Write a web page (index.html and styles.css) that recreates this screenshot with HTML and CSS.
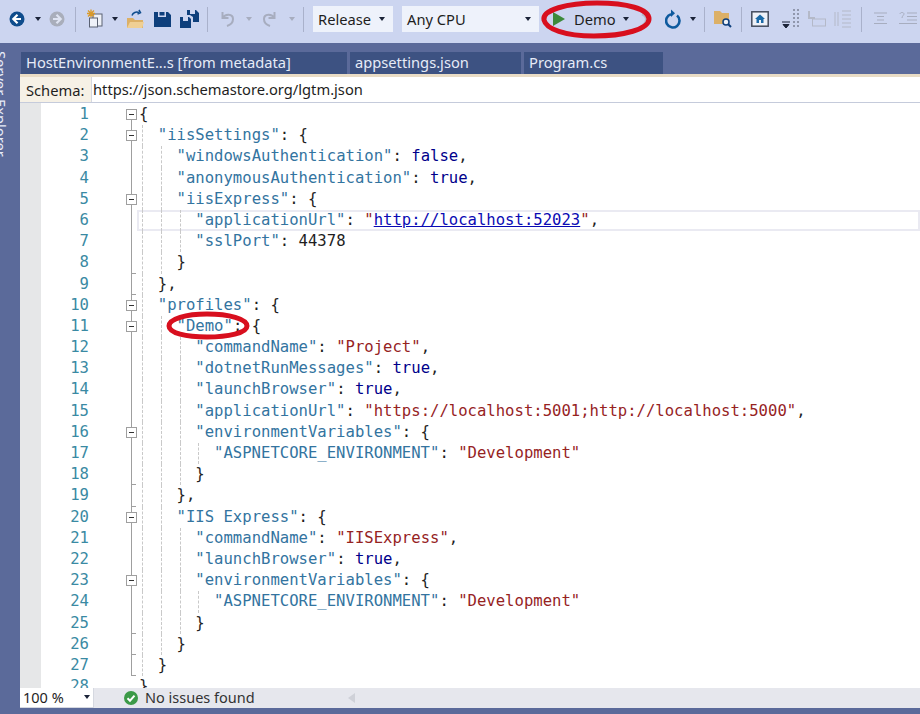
FILE: index.html
```html
<!doctype html>
<html>
    <head>
        <title>launchSettings.json</title>
        <link rel="stylesheet" href="styles.css">
    </head>
    <body>
        <div class="toolbar">
            <svg class="m9" width="16" height="16" viewBox="0 0 16 16"><circle cx="8" cy="8" r="7.5" fill="#0e4c8c"/><path d="M8.5 3.8 4.3 8l4.2 4.2M4.6 8H12" stroke="#fff" stroke-width="2.2" fill="none"/></svg>
            <span class="caret m10"></span>
            <svg class="m8" width="16" height="16" viewBox="0 0 16 16"><circle cx="8" cy="8" r="7.5" fill="#a9aebb"/><path d="M7.5 3.8 11.7 8l-4.2 4.2M11.4 8H4" stroke="#dfe4f2" stroke-width="2.2" fill="none"/></svg>
            <span class="sep m10"></span>
            <svg class="m10" width="18" height="20" viewBox="0 0 18 20"><rect x="7" y="5" width="9" height="12" fill="#eef1f8" stroke="#5a6273"/><rect x="3.5" y="9" width="8" height="9" fill="#eef1f8" stroke="#5a6273"/><path d="M5 0.5v8M1 4.500h8M2 1.500l6 6M8 1.500l-6 6" stroke="#d99a2b" stroke-width="1.300"/></svg>
            <span class="caret m8"></span>
            <svg class="m8" width="18" height="20" viewBox="0 0 18 20"><path d="M1 9h6l2 2h8v8H1z" fill="#dcb067"/><path d="M1 19l3-6h14l-2 6z" fill="#efcf94"/><path d="M6 6.500c1-3 4-4 7-3M13 .8l1.500 2.800L11.500 5" stroke="#0e4c8c" stroke-width="1.500" fill="none"/></svg>
            <svg class="m10" width="17" height="16" viewBox="0 0 17 16"><path d="M0 1h4v5h8V1h2l3 3v12H0z" fill="#0e3f7c"/><rect x="5.500" y="1" width="5" height="3.500" fill="#0e3f7c"/></svg>
            <svg class="m9" width="19" height="18" viewBox="0 0 19 18"><path d="M0 7h3v4h5V7h1l2 2v9H0z" fill="#0e3f7c"/><path d="M7 0h3v4h5V0h1l3 3v9h-6V7l-3-2H7z" fill="#0e3f7c"/></svg>
            <span class="sep m8"></span>
            <svg class="m11" width="16" height="18" viewBox="0 0 16 18"><path d="M3.500 2v6h6M3.800 8C6 3.500 14 3.500 14 9c0 3.500-3 6-6 7" stroke="#a7adbf" stroke-width="2" fill="none"/></svg>
            <span class="caret m11 dim"></span>
            <svg class="m10" width="16" height="18" viewBox="0 0 16 18"><path d="M12.500 2v6h-6M12.200 8C10 3.500 2 3.500 2 9c0 3.500 3 6 6 7" stroke="#a7adbf" stroke-width="2" fill="none"/></svg>
            <span class="caret m11 dim"></span>
            <span class="sep m8"></span>
            <div class="combo release m9">Release<span class="caret"></span></div>
            <div class="combo cpu m9">Any CPU<span class="caret"></span></div>
            <svg class="m14" width="12" height="14" viewBox="0 0 12 14"><path d="M0 0l12 7-12 7z" fill="#3c8a3a"/></svg>
            <span class="run m9">Demo</span>
            <span class="caret m7"></span>
            <svg class="m11" width="10" height="16" viewBox="0 0 10 16"><path d="M2 3c5 2 6 7 1 11" stroke="#b4b9c8" stroke-width="2.500" fill="none"/></svg>
            <svg class="m15" width="17" height="20" viewBox="0 0 17 20"><path d="M12 6.500a6.700 6.700 0 1 1-6-1.200" stroke="#0e5a9e" stroke-width="2.600" fill="none"/><path d="M6 .5v7.500l4-3.800z" fill="#0e5a9e"/></svg>
            <span class="caret m8"></span>
            <span class="sep m8"></span>
            <svg class="m9" width="18" height="18" viewBox="0 0 18 18"><path d="M0 1h6l2 2h7v11H0z" fill="#dcb067"/><circle cx="12" cy="12" r="3" fill="#eef1f8" stroke="#0e3f7c" stroke-width="1.500"/><path d="M14 14l3 3" stroke="#0e3f7c" stroke-width="2"/></svg>
            <span class="sep m9"></span>
            <svg class="m9" width="18" height="16" viewBox="0 0 18 16"><rect x=".8" y=".8" width="16.400" height="14.400" fill="#eef1f8" stroke="#444c5e" stroke-width="1.500"/><path d="M4 8l5-4.500L14 8h-1.500v4h-7V8z" fill="#1b6aa8"/><rect x="8" y="9" width="2" height="3" fill="#eef1f8"/></svg>
            <svg class="m11" width="20" height="22" viewBox="0 0 20 22"><path d="M2 14h8M3 16.500h6l-3 3.500z" stroke="#1b2338" fill="#1b2338"/><path d="M14 1v20M18 1v20" stroke="#7c8296" stroke-dasharray="2 2" stroke-width="1.500"/></svg>
            <svg class="m8" width="18" height="18" viewBox="0 0 18 18"><path d="M1 1v7h6" stroke="#b4b9c8" stroke-width="2" fill="none"/><rect x="4.500" y="9" width="13" height="7" fill="none" stroke="#b4b9c8"/></svg>
            <svg class="m8" width="18" height="18" viewBox="0 0 18 18"><path d="M4 2v14M1 2v14M8 1h9M8 5h9M8 9h9M8 13h9M8 17h9" stroke="#b4b9c8" fill="none"/></svg>
            <span class="sep m9"></span>
            <svg class="m12" width="13" height="14" viewBox="0 0 13 14"><path d="M0 1h13M3 4.500h7M3 8h7M0 11.500h13" stroke="#a7adbf" fill="none"/></svg>
            <svg class="m12" width="18" height="14" viewBox="0 0 18 14"><path d="M1 2c0-2 4-2 4 0 0 1-2 2-2 4M8 1h10M8 4.500h10M8 8h10M0 11.500h18" stroke="#a7adbf" fill="none"/></svg>
        </div>

        <div class="main">
            <div class="strip"><span>Server Explorer</span></div>
            <div class="content">
                <div class="tabs">
                    <div class="tab tab-meta">HostEnvironmentE...s [from metadata]</div>
                    <div class="tab tab-json">appsettings.json</div>
                    <div class="tab tab-cs">Program.cs</div>
                </div>
                <div class="schema">
                    <span class="schema-label">Schema:</span>
                    <div class="schema-url">https://json.schemastore.org/lgtm.json</div>
                </div>

                <div class="editor">
                    <div class="margin"></div>
                    <div class="lines">
                        <div class="row"><span class="num">1</span><span class="fold first"><i class="box"></i></span><div class="code">{</div></div>
                        <div class="row"><span class="num">2</span><span class="fold"><i class="box"></i></span><div class="code"><i class="ind"></i><b class="k">"iisSettings"</b>: {</div></div>
                        <div class="row"><span class="num">3</span><span class="fold"></span><div class="code"><i class="ind"></i><i class="ind"></i><b class="k">"windowsAuthentication"</b>: <b class="v">false</b>,</div></div>
                        <div class="row"><span class="num">4</span><span class="fold"></span><div class="code"><i class="ind"></i><i class="ind"></i><b class="k">"anonymousAuthentication"</b>: <b class="v">true</b>,</div></div>
                        <div class="row"><span class="num">5</span><span class="fold"><i class="box"></i></span><div class="code"><i class="ind"></i><i class="ind"></i><b class="k">"iisExpress"</b>: {</div></div>
                        <div class="row"><span class="num">6</span><span class="fold"></span><div class="code current"><i class="ind"></i><i class="ind"></i><i class="ind"></i><b class="k">"applicationUrl"</b>: <b class="s">"<u>http://localhost:52023</u>"</b>,</div></div>
                        <div class="row"><span class="num">7</span><span class="fold"></span><div class="code"><i class="ind"></i><i class="ind"></i><i class="ind"></i><b class="k">"sslPort"</b>: 44378</div></div>
                        <div class="row"><span class="num">8</span><span class="fold end"></span><div class="code"><i class="ind"></i><i class="ind"></i>}</div></div>
                        <div class="row"><span class="num">9</span><span class="fold end"></span><div class="code"><i class="ind"></i>},</div></div>
                        <div class="row"><span class="num">10</span><span class="fold"><i class="box"></i></span><div class="code"><i class="ind"></i><b class="k">"profiles"</b>: {</div></div>
                        <div class="row"><span class="num">11</span><span class="fold"><i class="box"></i></span><div class="code"><i class="ind"></i><i class="ind"></i><b class="k">"Demo"</b>: {</div></div>
                        <div class="row"><span class="num">12</span><span class="fold"></span><div class="code"><i class="ind"></i><i class="ind"></i><i class="ind"></i><b class="k">"commandName"</b>: <b class="s">"Project"</b>,</div></div>
                        <div class="row"><span class="num">13</span><span class="fold"></span><div class="code"><i class="ind"></i><i class="ind"></i><i class="ind"></i><b class="k">"dotnetRunMessages"</b>: <b class="v">true</b>,</div></div>
                        <div class="row"><span class="num">14</span><span class="fold"></span><div class="code"><i class="ind"></i><i class="ind"></i><i class="ind"></i><b class="k">"launchBrowser"</b>: <b class="v">true</b>,</div></div>
                        <div class="row"><span class="num">15</span><span class="fold"></span><div class="code"><i class="ind"></i><i class="ind"></i><i class="ind"></i><b class="k">"applicationUrl"</b>: <b class="s">"https://localhost:5001;http://localhost:5000"</b>,</div></div>
                        <div class="row"><span class="num">16</span><span class="fold"><i class="box"></i></span><div class="code"><i class="ind"></i><i class="ind"></i><i class="ind"></i><b class="k">"environmentVariables"</b>: {</div></div>
                        <div class="row"><span class="num">17</span><span class="fold"></span><div class="code"><i class="ind"></i><i class="ind"></i><i class="ind"></i><i class="ind"></i><b class="k">"ASPNETCORE_ENVIRONMENT"</b>: <b class="s">"Development"</b></div></div>
                        <div class="row"><span class="num">18</span><span class="fold end"></span><div class="code"><i class="ind"></i><i class="ind"></i><i class="ind"></i>}</div></div>
                        <div class="row"><span class="num">19</span><span class="fold end"></span><div class="code"><i class="ind"></i><i class="ind"></i>},</div></div>
                        <div class="row"><span class="num">20</span><span class="fold"><i class="box"></i></span><div class="code"><i class="ind"></i><i class="ind"></i><b class="k">"IIS Express"</b>: {</div></div>
                        <div class="row"><span class="num">21</span><span class="fold"></span><div class="code"><i class="ind"></i><i class="ind"></i><i class="ind"></i><b class="k">"commandName"</b>: <b class="s">"IISExpress"</b>,</div></div>
                        <div class="row"><span class="num">22</span><span class="fold"></span><div class="code"><i class="ind"></i><i class="ind"></i><i class="ind"></i><b class="k">"launchBrowser"</b>: <b class="v">true</b>,</div></div>
                        <div class="row"><span class="num">23</span><span class="fold"><i class="box"></i></span><div class="code"><i class="ind"></i><i class="ind"></i><i class="ind"></i><b class="k">"environmentVariables"</b>: {</div></div>
                        <div class="row"><span class="num">24</span><span class="fold"></span><div class="code"><i class="ind"></i><i class="ind"></i><i class="ind"></i><i class="ind"></i><b class="k">"ASPNETCORE_ENVIRONMENT"</b>: <b class="s">"Development"</b></div></div>
                        <div class="row"><span class="num">25</span><span class="fold end"></span><div class="code"><i class="ind"></i><i class="ind"></i><i class="ind"></i>}</div></div>
                        <div class="row"><span class="num">26</span><span class="fold end"></span><div class="code"><i class="ind"></i><i class="ind"></i>}</div></div>
                        <div class="row"><span class="num">27</span><span class="fold end"></span><div class="code"><i class="ind"></i>}</div></div>
                        <div class="row"><span class="num">28</span><span class="fold none"></span><div class="code">}</div></div>
                    </div>
                </div>

                <div class="status">
                    <div class="zoom-box">100 %<span class="caret"></span></div>
                    <svg class="check" width="14" height="14" viewBox="0 0 14 14"><circle cx="7" cy="7" r="7" fill="#3c9a48"/><path d="M3.500 7.200l2.500 2.500 4.500-5" stroke="#fff" stroke-width="2" fill="none"/></svg>
                    <span class="issues">No issues found</span>
                    <span class="scroll-left"></span>
                </div>
            </div>
        </div>

        <svg class="marks" width="920" height="714" viewBox="0 0 920 714">
            <path d="M544 20c-2-10 23-17 53-17 30 0 52 6 52 16 0 10-25 17-55 17-29 0-48-7-50-16z"/>
            <path d="M169 326c0-7 17-12 38-12 22 0 40 5 40 12 0 7-19 11-40 11-21 0-38-4-38-11z"/>
        </svg>
    </body>
</html>
```
FILE: styles.css
```css
* {
    box-sizing: border-box;
}

html,
body {
    margin: 0;
    padding: 0;
    height: 714px;
    overflow: hidden;
    background: #5b6a9a;
    font-family: "Noto Sans", "Open Sans", sans-serif;
    font-size: 14.7px;
    color: #1e1e1e;
    position: relative;
}

.caret {
    display: inline-block;
    width: 0;
    height: 0;
    flex: none;
    border-left: 3.5px solid transparent;
    border-right: 3.5px solid transparent;
    border-top: 4px solid #1b2338;
}

.caret.dim {
    border-top-color: #a7adbf;
}

.m7 { margin-left: 7px; }
.m8 { margin-left: 8px; }
.m9 { margin-left: 9px; }
.m10 { margin-left: 10px; }
.m11 { margin-left: 11px; }
.m12 { margin-left: 12px; }
.m14 { margin-left: 14px; }
.m15 { margin-left: 15px; }

.toolbar {
    height: 43px;
    padding-bottom: 5px;
    display: flex;
    align-items: center;
    background: #ccd5f0;
    overflow: hidden;

    > * {
        flex: none;
    }

    .sep {
        width: 1px;
        height: 25px;
        background: #a9b1cb;
    }

    .combo {
        height: 26px;
        padding: 0 8px 0 5px;
        display: flex;
        align-items: center;
        justify-content: space-between;
        background: #eef2fb;
    }

    .release {
        width: 80px;
    }

    .cpu {
        width: 137px;
    }

    .run {
        width: 42px;
    }
}

.main {
    display: flex;
    height: 671px;
}

.strip {
    width: 20px;
    flex: none;
    color: #e6ebf7;
    overflow: hidden;
    padding-top: 8px;

    span {
        display: block;
        writing-mode: vertical-rl;
        margin-left: -9px;
        white-space: nowrap;
    }
}

.content {
    flex: 1;
    min-width: 0;
    display: flex;
    flex-direction: column;
}

.tabs {
    height: 34px;
    padding-top: 9px;
    display: flex;
    gap: 3px;
    border-bottom: 3px solid #e9dcc5;
}

.tab {
    height: 22px;
    padding: 0 5px;
    line-height: 21px;
    background: #3d5282;
    color: #e6ebf7;
    white-space: nowrap;
}

.tab-meta {
    margin-left: 1px;
    width: 326px;
}

.tab-json {
    width: 171px;
}

.tab-cs {
    width: 139px;
}

.schema {
    height: 26px;
    display: flex;
    align-items: center;
    background: #f6f1e6;
    border-bottom: 1px solid #c5cbdb;

    .schema-label {
        width: 71px;
        padding-left: 6px;
    }

    .schema-url {
        flex: 1;
        height: 100%;
        padding-left: 1px;
        line-height: 25px;
        background: #fff;
        border-left: 1px solid #d5d8e0;
    }
}

.editor {
    height: 585px;
    display: flex;
    overflow: hidden;
    background: #fff;

    .margin {
        width: 21px;
        flex: none;
        background: #e6e7e8;
    }

    .lines {
        flex: 1;
        min-width: 0;
        padding-top: 1px;
    }
}

.row {
    height: 21.2px;
    display: flex;
    font-family: "DejaVu Sans Mono", "Liberation Mono", monospace;
    font-size: 15.6px;
    line-height: 21.2px;
    white-space: nowrap;
}

.num {
    width: 48px;
    flex: none;
    text-align: right;
    color: #3a8aa3;
}

.fold {
    width: 48px;
    flex: none;
    position: relative;

    /* the outline line running down the margin */
    &::before {
        content: "";
        position: absolute;
        left: 42px;
        top: 0;
        bottom: 0;
        width: 1px;
        background: #9f9f9f;
    }

    &.first::before {
        top: 10px;
    }

    &.none::before {
        display: none;
    }

    &.end::after {
        content: "";
        position: absolute;
        left: 42px;
        bottom: 0;
        width: 5px;
        height: 1px;
        background: #9f9f9f;
    }

    .box {
        position: absolute;
        left: 37px;
        top: 5px;
        width: 11px;
        height: 11px;
        background: #fff;
        border: 1px solid #9f9f9f;

        &::after {
            content: "";
            position: absolute;
            left: 2px;
            top: 4px;
            width: 5px;
            height: 1px;
            background: #333;
        }
    }
}

.code {
    flex: 1;
    min-width: 0;
    display: flex;
    padding-left: 2px;
    white-space: pre;

    &.current {
        box-shadow: inset 0 0 0 2px #eaeaf2;
    }

    b {
        font-weight: normal;
    }

    .ind {
        flex: none;
        width: 18.78px;
        position: relative;

        &::before {
            content: "";
            position: absolute;
            left: 3px;
            top: 0;
            bottom: 0;
            border-left: 1px dashed #c9c9c9;
        }
    }

    .k {
        color: #33749f;
    }

    .s {
        color: #96231f;
    }

    .s u {
        color: #0a0ab4;
    }

    .v {
        color: #00008b;
    }
}

.status {
    height: 20px;
    display: flex;
    align-items: center;
    background: #e6e7ed;
    font-size: 14.5px;

    .zoom-box {
        width: 74px;
        height: 20px;
        padding: 0 3px 2px 3px;
        display: flex;
        align-items: center;
        justify-content: space-between;
        background: #fff;
        border: 1px solid #d5d8e0;
        border-width: 0 1px 1px 0;
    }

    .check {
        margin-left: 30px;
    }

    .issues {
        margin-left: 7px;
        margin-bottom: 2px;
        color: #333;
    }

    .scroll-left {
        margin-left: 93px;
        width: 0;
        height: 0;
        border-top: 5px solid transparent;
        border-bottom: 5px solid transparent;
        border-right: 7px solid #cfd1d8;
    }
}

.marks {
    position: absolute;
    left: 0;
    top: 0;
    pointer-events: none;

    path {
        fill: none;
        stroke: #d80f1e;
        stroke-width: 5;
    }
}
```
